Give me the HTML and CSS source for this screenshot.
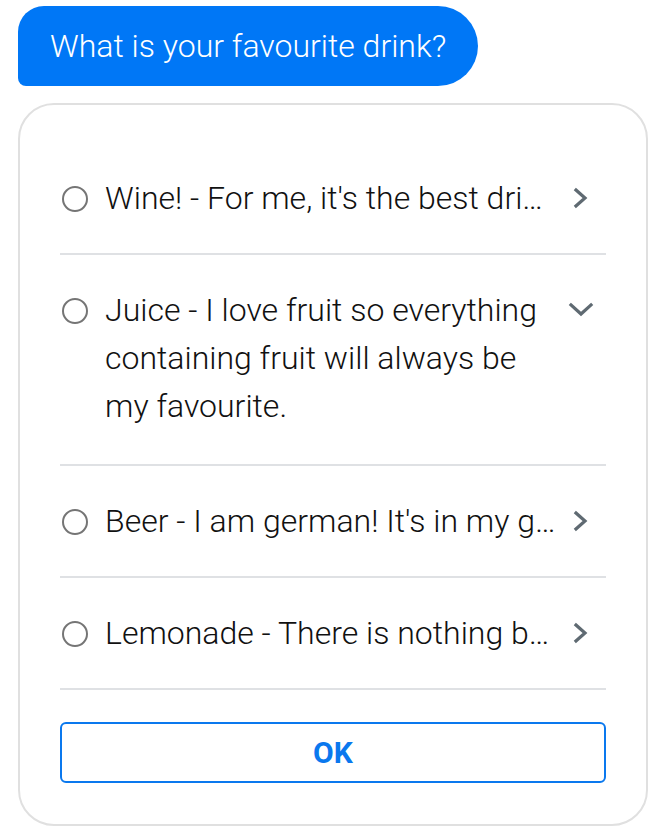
FILE: index.html
```html
<!DOCTYPE html>
<html lang="en">
<head>
<meta charset="utf-8">
<title>Favourite drink</title>
<link rel="stylesheet" href="styles.css">
</head>
<body>
<div class="chat">
  <div class="bubble">What is your favourite drink?</div>
  <div class="card">
    <div class="option">
      <span class="radio"></span>
      <span class="label one">Wine! - For me, it's the best dri…</span>
      <span class="chev"><svg width="18" height="22" viewBox="0 0 18 22"><path d="M4 3 L13 11 L4 19" fill="none" stroke="#5f6a72" stroke-width="3.2" stroke-linecap="square"/></svg></span>
    </div>
    <div class="option open">
      <span class="radio"></span>
      <span class="label">Juice - I love fruit so everything containing fruit will always be my favourite.</span>
      <span class="chev"><svg width="26" height="18" viewBox="0 0 26 18"><path d="M3 4 L13 13 L23 4" fill="none" stroke="#5f6a72" stroke-width="3.2" stroke-linecap="square"/></svg></span>
    </div>
    <div class="option">
      <span class="radio"></span>
      <span class="label one">Beer - I am german! It's in my g…</span>
      <span class="chev"><svg width="18" height="22" viewBox="0 0 18 22"><path d="M4 3 L13 11 L4 19" fill="none" stroke="#5f6a72" stroke-width="3.2" stroke-linecap="square"/></svg></span>
    </div>
    <div class="option">
      <span class="radio"></span>
      <span class="label one">Lemonade - There is nothing b…</span>
      <span class="chev"><svg width="18" height="22" viewBox="0 0 18 22"><path d="M4 3 L13 11 L4 19" fill="none" stroke="#5f6a72" stroke-width="3.2" stroke-linecap="square"/></svg></span>
    </div>
    <button class="ok">OK</button>
  </div>
</div>
</body>
</html>
```
FILE: styles.css
```css
html, body {
  margin: 0;
  padding: 0;
  background: #ffffff;
}
body {
  font-family: Roboto, "Liberation Sans", sans-serif;
}
.chat {
  padding: 6px 20px 0 18px;
  display: flex;
  flex-direction: column;
  align-items: flex-start;
  gap: 17px;
}
.bubble {
  background: #0077f6;
  color: #ffffff;
  font-size: 32px;
  font-weight: 300;
  line-height: 80px;
  height: 80px;
  padding: 0 32px;
  border-radius: 26px 40px 40px 8px;
  box-sizing: border-box;
  white-space: nowrap;
}
.card {
  align-self: stretch;
  border: 2px solid #e0e0e0;
  border-radius: 36px;
  padding: 38px 40px 41px;
  display: flex;
  flex-direction: column;
}
.option {
  display: flex;
  align-items: flex-start;
  padding: 31px 0;
  border-bottom: 2px solid #dfe1e4;
}
.option.open {
  padding-bottom: 34px;
}
.radio {
  flex: none;
  width: 26px;
  height: 26px;
  box-sizing: border-box;
  border: 2px solid #757575;
  border-radius: 50%;
  margin: 12px 17px 0 2px;
}
.label {
  flex: 1;
  min-width: 0;
  font-size: 32px;
  font-weight: 300;
  line-height: 48px;
  color: #111111;
}
.label.one {
  white-space: nowrap;
}
.chev {
  flex: none;
  width: 50px;
  height: 48px;
  display: flex;
  align-items: center;
  justify-content: center;
  margin-left: 6px;
}
.ok {
  margin-top: 32px;
  height: 61px;
  background: #ffffff;
  border: 2px solid #0a78ee;
  border-radius: 6px;
  color: #0a78ee;
  font-family: Roboto, "Liberation Sans", sans-serif;
  font-size: 30px;
  font-weight: 700;
}
```
